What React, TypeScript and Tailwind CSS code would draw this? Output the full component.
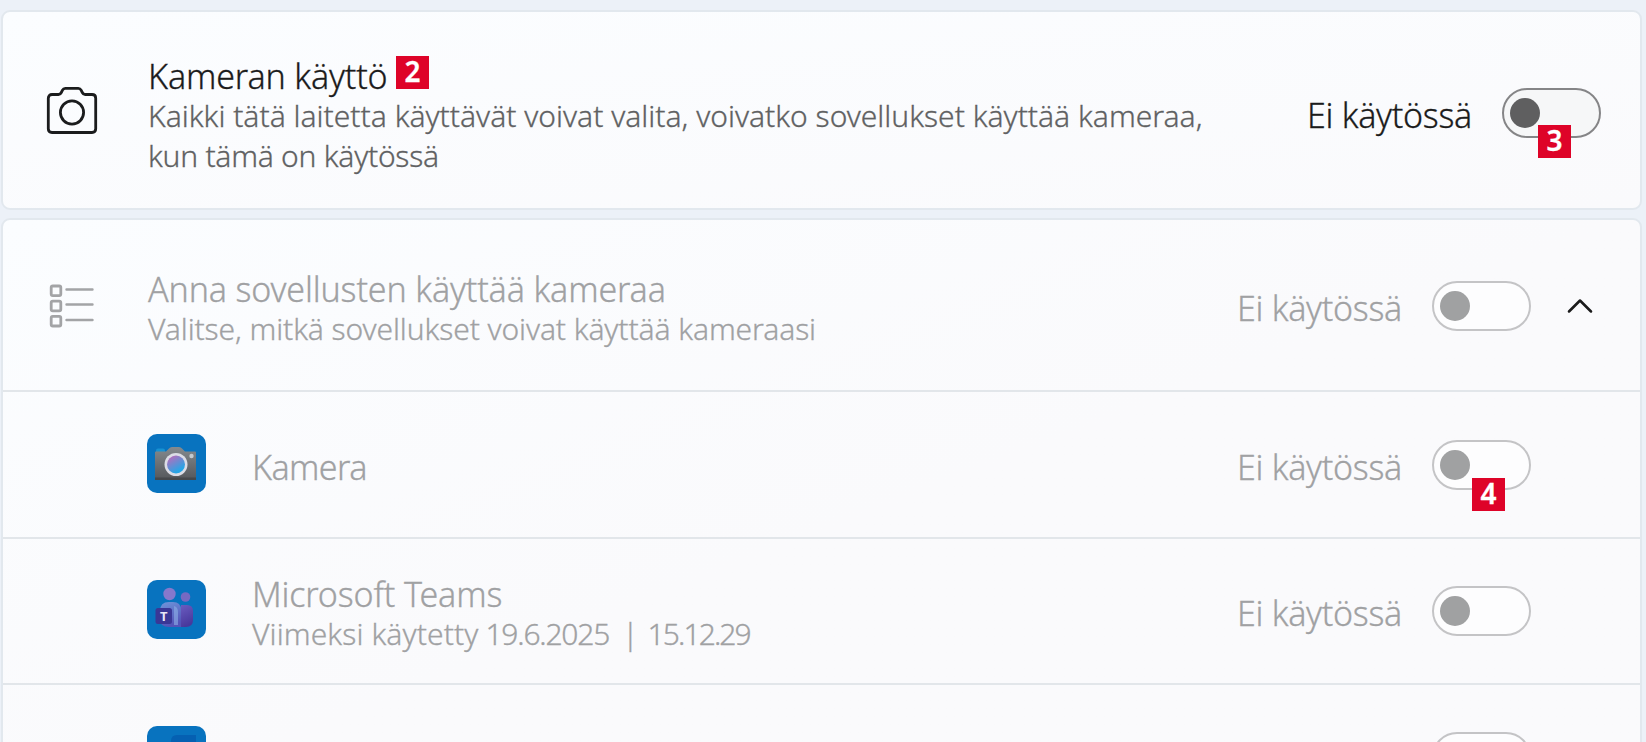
import { ChevronUp } from "lucide-react";

function Toggle({ disabled = false }: { disabled?: boolean }) {
    return (
    <div className={`flex w-[99px] h-[50px] shrink-0 items-center rounded-full border-2 pl-[6px] ${disabled ? "border-[#c4c4c6] bg-[#fdfdfe]" : "border-[#858587] bg-[#f6f7f8]"}`}>
        <div className={`size-[30px] rounded-full ${disabled ? "bg-[#a0a1a2]" : "bg-[#5f5f60]"}`} />
    </div>
    );
}

function Status() {
    return <span className="mr-[30px] pt-[4px] tracking-[-0.3px]">Ei käytössä</span>;
}

function Marker({ children, className }: { children: string; className: string }) {
    return (
    <span className={`absolute flex size-[33px] items-center justify-center bg-[#de0328] pb-[3px] font-['Noto_Sans',sans-serif] text-[28px] leading-none font-semibold tracking-normal text-white ${className}`}>{children}</span>
    );
}

function CameraIcon() {
    return (
    <svg className="-mt-[3px] h-[50px] w-[52px]" viewBox="0 0 52 50" fill="none" stroke="#1b1c1d" strokeWidth="2.8">
        <path d="M6 8.5h6.5c1.4 0 2.2-.8 2.8-2l1.2-2.4c.6-1.2 1.4-1.8 2.8-1.8h13c1.4 0 2.2.6 2.8 1.8l1.2 2.4c.6 1.2 1.4 2 2.8 2H46c2.2 0 3.7 1.5 3.7 3.700v30.600c0 2.200-1.500 3.700-3.700 3.700H6c-2.200 0-3.700-1.500-3.700-3.700V12.200C2.300 10 3.800 8.500 6 8.500Z" />
        <circle cx="26" cy="26.5" r="11.6" />
    </svg>
    );
}

function ListIcon() {
    return (
    <svg className="h-[46px] w-[46px]" viewBox="0 0 46 46" fill="none" stroke="#a3a4a6" strokeWidth="2.8">
        <rect x="2.2" y="3" width="9.6" height="9.6" rx="1.6" />
        <rect x="2.2" y="18.2" width="9.6" height="9.6" rx="1.6" />
        <rect x="2.2" y="33.4" width="9.6" height="9.6" rx="1.6" />
        <path d="M17.5 6.500h26M17.500 21.500h26M17.500 37h26" strokeWidth="2.4" strokeLinecap="round" />
    </svg>
    );
}

function CameraApp() {
    return (
    <svg className="-mt-[2px] size-[59px] shrink-0" viewBox="0 0 59 59">
        <defs>
            <linearGradient id="camBody" x1="0" y1="0" x2="0" y2="1">
                <stop offset="0" stopColor="#858a8e" />
                <stop offset="1" stopColor="#54575b" />
            </linearGradient>
            <linearGradient id="camLens" x1="0" y1="0" x2="0.6" y2="1">
                <stop offset="0.2" stopColor="#a873c0" />
                <stop offset="0.9" stopColor="#27a5e6" />
            </linearGradient>
        </defs>
        <rect width="59" height="59" rx="10" fill="#0873bf" />
        <rect x="9" y="14.5" width="9" height="5" rx="2" fill="#1792d2" />
        <path d="M9 17.5h10l3-3q1-1.5 3-1.5h7q2 0 3 1.5l3 3h10q1 0 1 1V46H8V18.5q0-1 1-1Z" fill="url(#camBody)" />
        <path d="M8 43.5h41V46H8Z" fill="#45484c" />
        <circle cx="29" cy="30.5" r="11.5" fill="#dcdde6" />
        <circle cx="29" cy="30.5" r="9" fill="url(#camLens)" />
        <circle cx="44.5" cy="22" r="2.2" fill="#c3cacf" />
    </svg>
    );
}

function TeamsApp() {
    return (
    <svg className="-mt-[3px] size-[59px] shrink-0" viewBox="0 0 59 59">
        <defs>
            <linearGradient id="teamsFront" x1="0" y1="0" x2="0.3" y2="1">
                <stop offset="0" stopColor="#6f96da" />
                <stop offset="1" stopColor="#5454b8" />
            </linearGradient>
            <linearGradient id="teamsBack" x1="0" y1="0" x2="0.3" y2="1">
                <stop offset="0" stopColor="#6a5cc0" />
                <stop offset="1" stopColor="#48389c" />
            </linearGradient>
        </defs>
        <rect width="59" height="59" rx="10" fill="#0873bf" />
        <circle cx="22.5" cy="14" r="6.2" fill="#8678cc" />
        <circle cx="38.5" cy="17" r="4.8" fill="#7669c2" />
        <path d="M34 25h6q6 0 6 6v9q0 7-7 7h-5Z" fill="url(#teamsBack)" />
        <path d="M13 31q0-9 9-9h4q8 0 8 8v17H22q-9 0-9-8Z" fill="url(#teamsFront)" />
        <path d="M27 26q4 1 4 6v13h-4Z" fill="#8db0e6" opacity="0.6" />
        <rect x="8.5" y="28" width="16.5" height="16" rx="2.5" fill="#3a3796" />
        <text x="16.7" y="40.5" textAnchor="middle" fill="#e6e6f5" className="font-['Noto_Sans',sans-serif] text-[13px] font-bold">T</text>
    </svg>
    );
}

function NextApp() {
    return (
    <svg className="-mt-[3px] size-[59px] shrink-0" viewBox="0 0 59 59">
        <rect width="59" height="59" rx="10" fill="#0873bf" />
        <path d="M24 15q0-6 6-6h19v40H24Z" fill="#0560b2" />
    </svg>
    );
}

export default function App() {
    return (
    <main className="h-[742px] w-[1646px] overflow-hidden bg-[#ecf1f8] pt-[10px] pl-px font-['Noto_Sans',sans-serif] text-[34px] leading-[40px] font-light tracking-[-0.15px] [-webkit-text-stroke:0.3px]">
        <section className="flex h-[200px] w-[1641px] items-center rounded-[9px] border-2 border-[#e2e8ee] bg-linear-to-br from-[#fbfdff] to-[#fafafc] pt-[5px] pr-[39px] pl-[43px]">
            <div className="w-[102px]"><CameraIcon /></div>
            <div className="grow pt-[6px]">
                <h2 className="text-[#1b1b1b]"><span className="relative">Kameran käyttö<Marker className="top-[3px] left-[248px]">2</Marker></span></h2>
                <p className="text-[30px] tracking-normal text-[#606162] whitespace-nowrap">Kaikki tätä laitetta käyttävät voivat valita, voivatko sovellukset käyttää kameraa,<br /><span className="tracking-[-0.25px]">kun tämä on käytössä</span></p>
            </div>
            <div className="flex items-center text-[#1b1b1b]">
                <Status />
                <div className="relative">
                    <Toggle />
                    <Marker className="top-[37px] left-[36px]">3</Marker>
                </div>
            </div>
        </section>

        <section className="mt-[8px] h-[640px] w-[1641px] divide-y-2 divide-[#e2e6ea] rounded-[9px] border-2 border-[#e2e8ee] bg-linear-to-br from-[#fbfdff] via-[#fafafc] to-[#fafafc] text-[#a0a1a3]">
            <div className="flex h-[172px] items-center pt-[2px] pr-[38px] pl-[46px]">
                <div className="w-[99px]"><ListIcon /></div>
                <div className="grow pt-[6px]">
                    <h2>Anna sovellusten käyttää kameraa</h2>
                    <p className="text-[30px] tracking-[-0.1px]">Valitse, mitkä sovellukset voivat käyttää kameraasi</p>
                </div>
                <Status />
                <Toggle disabled />
                <ChevronUp className="ml-[27px] size-[44px] text-[#1b1b1b]" strokeWidth={1.4} />
            </div>
            <div className="flex h-[147px] items-center pr-[109px] pl-[144px]">
                <CameraApp />
                <h3 className="ml-[46px] grow pt-[4px] tracking-[-0.6px]">Kamera</h3>
                <Status />
                <div className="relative">
                    <Toggle disabled />
                    <Marker className="top-[38px] left-[40px]">4</Marker>
                </div>
            </div>
            <div className="flex h-[146px] items-center pr-[109px] pl-[144px]">
                <TeamsApp />
                <div className="ml-[46px] grow pt-[5px]">
                    <h3>Microsoft Teams</h3>
                    <p className="flex text-[30px] tracking-[0.1px]">
                        <span className="mr-[7px]">Viimeksi käytetty</span>
                        <span className="mr-[13px] tracking-[-1.2px]">19.6.2025</span>
                        <span className="mr-[9px]">|</span>
                        <span className="tracking-[-1.9px]">15.12.29</span>
                    </p>
                </div>
                <Status />
                <Toggle disabled />
            </div>
            <div className="flex h-[144px] items-center pr-[109px] pl-[144px]">
                <NextApp />
                <div className="grow" />
                <Toggle disabled />
            </div>
        </section>
    </main>
    );
}
